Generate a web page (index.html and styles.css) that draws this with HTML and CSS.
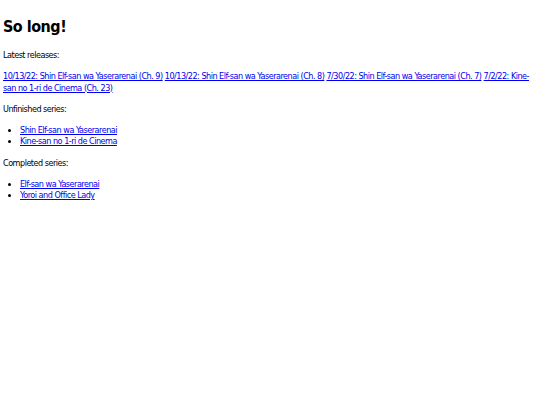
FILE: index.html
```html
<!DOCTYPE html>
<html lang="en">
<head>
    <meta charset="UTF-8">
    <meta name="viewport" content="width=device-width, initial-scale=1.0">
    <title>So long!</title>
    <link rel="stylesheet" href="styles.css">
</head>

<body>
    <h1 class="title">So long!</h1>

    <p>Latest releases:</p>
    <p class="releases">
        <a href="#">10/13/22: Shin Elf-san wa Yaserarenai (Ch. 9)</a>
        <a href="#">10/13/22: Shin Elf-san wa Yaserarenai (Ch. 8)</a>
        <a href="#">7/30/22: Shin Elf-san wa Yaserarenai (Ch. 7)</a>
        <a href="#">7/2/22: Kine-san no 1-ri de Cinema (Ch. 23)</a>
    </p>

    <p>Unfinished series:</p>
    <ul class="series">
        <li><a href="#">Shin Elf-san wa Yaserarenai</a></li>
        <li><a href="#">Kine-san no 1-ri de Cinema</a></li>
    </ul>

    <p>Completed series:</p>
    <ul class="series">
        <li><a href="#">Elf-san wa Yaserarenai</a></li>
        <li><a href="#">Yoroi and Office Lady</a></li>
    </ul>
</body>
</html>
```

FILE: styles.css
```css
body {
    margin: 4px 3px;
    font-family: "DejaVu Sans Condensed", sans-serif;
    font-size: 9px;
    letter-spacing: -0.5px;
    line-height: 11.25px;
    color: #000;
    background-color: #fff;
}

.title {
    font-size: 16px;
    letter-spacing: -0.5px;
    line-height: 23px;
    margin: 11px 0 12px;
}

p {
    margin: 10px 0;
}

a {
    color: #0000ee;
}

.series {
    margin: 10px 0;
    padding-left: 17px;
}
```
